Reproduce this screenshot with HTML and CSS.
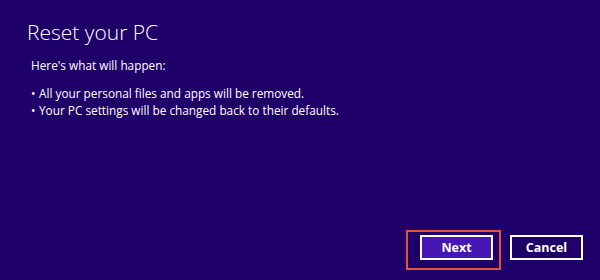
FILE: index.html
```html
<!DOCTYPE html>
<html lang="en">
<head>
    <meta charset="UTF-8">
    <title>Reset your PC</title>
    <link rel="stylesheet" href="styles.css">
</head>
<body>
    <div class="page">
        <h1>Reset your PC</h1>
        <p class="intro">Here's what will happen:</p>
        <ul class="changes">
            <li>All your personal files and apps will be removed.</li>
            <li>Your PC settings will be changed back to their defaults.</li>
        </ul>
        <div class="actions">
            <button class="btn btn-next highlighted">Next</button>
            <button class="btn">Cancel</button>
        </div>
    </div>
</body>
</html>
```

FILE: styles.css
```css
body {
    margin: 0;
    background-color: #1f0068;
    color: #ffffff;
    font-family: 'Open Sans', 'Noto Sans', sans-serif;
}
.page {
    height: 280px;
    box-sizing: border-box;
    padding: 17px 17px 20px 27px;
    display: flex;
    flex-direction: column;
}
h1 {
    margin: 0;
    font-size: 21px;
    font-weight: 300;
    line-height: 30px;
}
.intro {
    margin: 10px 0 0 4px;
    font-size: 11.8px;
    line-height: 17px;
}
.changes {
    list-style: none;
    margin: 11px 0 0 4px;
    padding: 0;
    font-size: 11.8px;
    line-height: 17px;
}
.changes li::before {
    content: "\2022";
    display: inline-block;
    width: 8px;
}
.actions {
    margin-top: auto;
    display: flex;
    justify-content: flex-end;
    gap: 17px;
}
.btn {
    width: 73px;
    height: 25px;
    box-sizing: border-box;
    border: 2px solid #ffffff;
    background-color: transparent;
    color: #ffffff;
    font-family: 'Open Sans', 'Noto Sans', sans-serif;
    font-size: 12.5px;
    font-weight: 700;
    padding: 0;
}
.btn-next {
    background-color: #4617b4;
}
.highlighted {
    position: relative;
}
.highlighted::after {
    content: "";
    position: absolute;
    top: -7px;
    right: -10px;
    bottom: -12px;
    left: -16px;
    border: 2px solid #e8503e;
}
```
